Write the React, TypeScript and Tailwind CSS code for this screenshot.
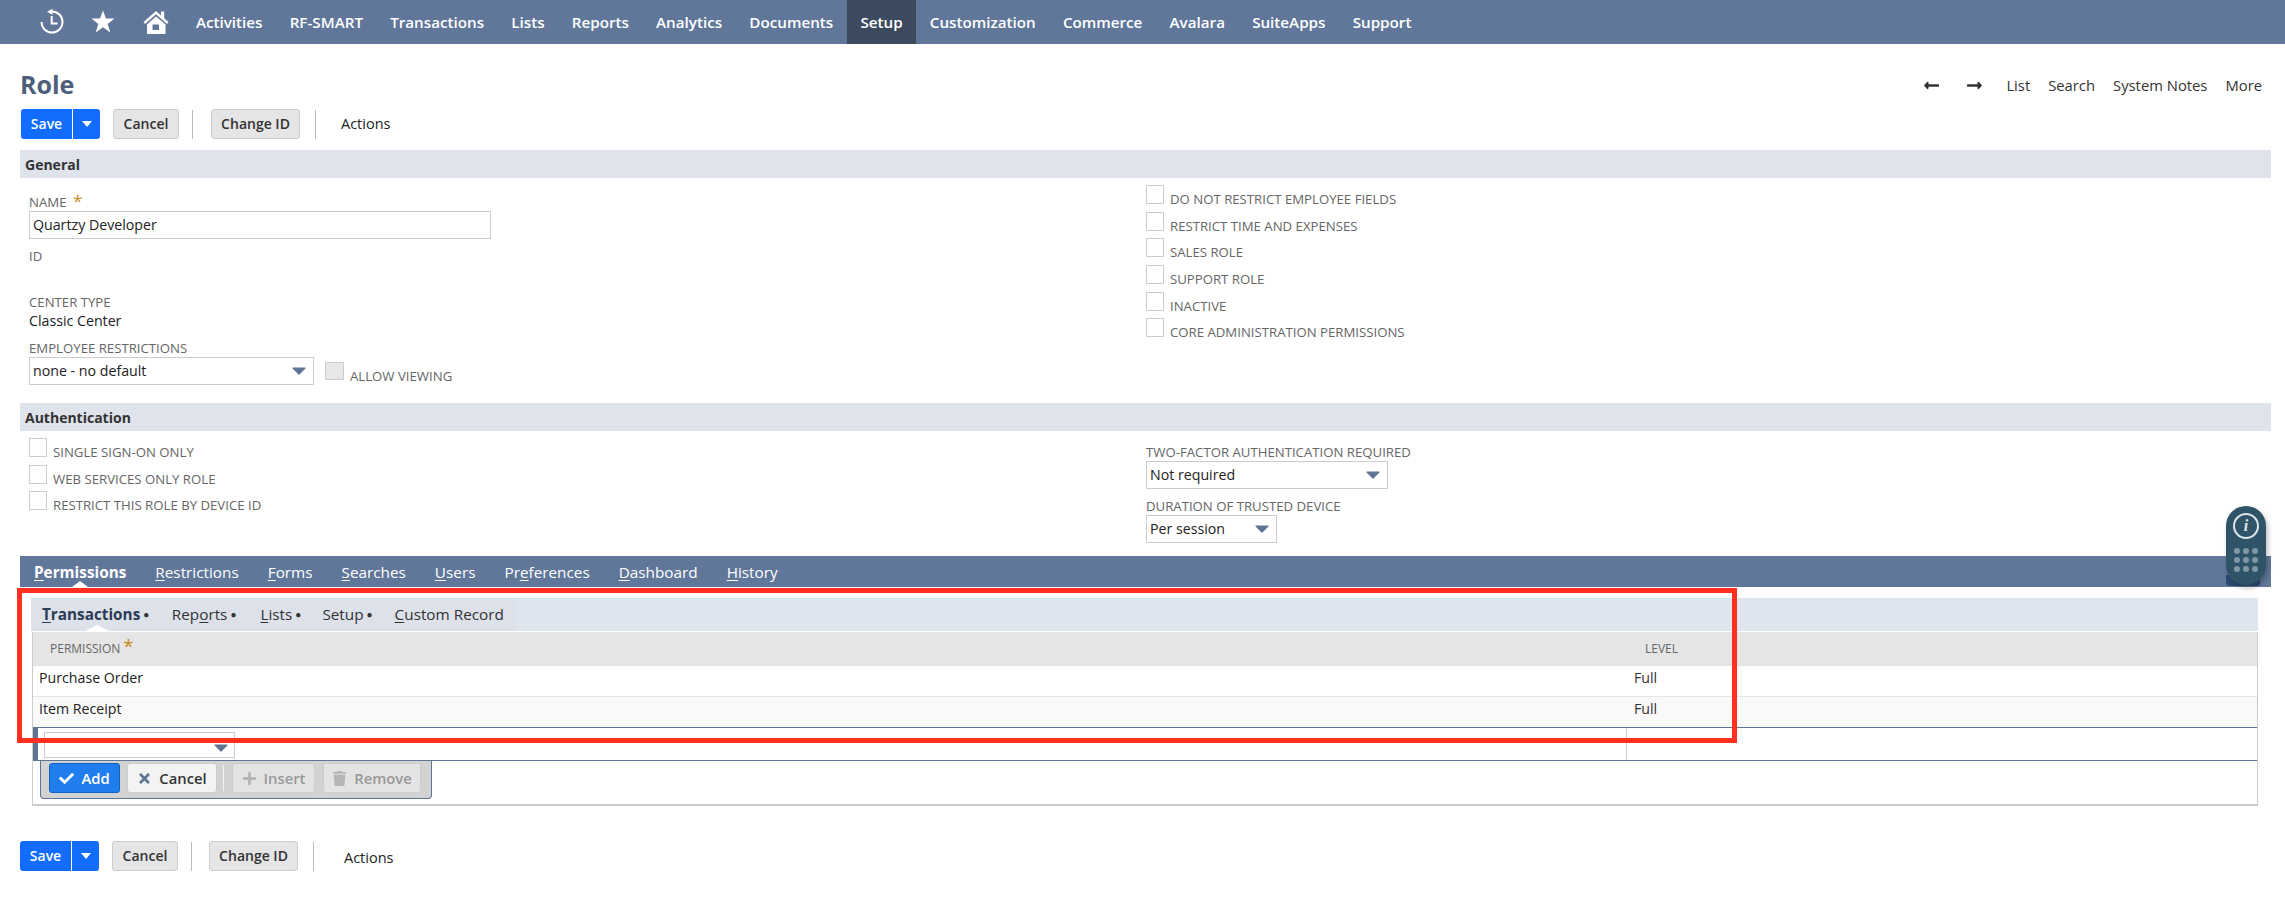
import { FaCheck, FaLongArrowAltLeft, FaLongArrowAltRight, FaPlus, FaTimes, FaTrash } from "react-icons/fa";

const navItems = ["Activities", "RF-SMART", "Transactions", "Lists", "Reports", "Analytics", "Documents", "Setup", "Customization", "Commerce", "Avalara", "SuiteApps", "Support"];

const recordTabs = [
	["", "P", "ermissions"],
	["", "R", "estrictions"],
	["", "F", "orms"],
	["", "S", "earches"],
	["", "U", "sers"],
	["Pr", "e", "ferences"],
	["", "D", "ashboard"],
	["", "H", "istory"],
];

function Caret({ className = "" }: { className?: string }) {
	return (
		<svg viewBox="0 0 14 8" className={`w-[14px] h-[8px] ${className}`}>
			<path d="M1 0.5h12a.6.6 0 0 1 .45 1L7.5 7.5a.7.7 0 0 1-1 0L.55 1.5A.6.6 0 0 1 1 .5z" fill="#5f7595" />
		</svg>
	);
}

function Select({ value, className }: { value: string; className: string }) {
	return (
		<div className={`flex items-center justify-between border border-[#ccc] pl-[3px] pr-[7px] text-[14.2px] text-[#222] ${className}`}>
			<span className="pb-px">{value}</span>
			<Caret />
		</div>
	);
}

function CheckRow({ label }: { label: string }) {
	return (
		<div className="flex h-[26.7px] items-start">
			<div className="w-[18px] h-[19px] border border-[#ccc] bg-white" />
			<span className="ml-[6px] mt-[5px] h-[18px] leading-[18px] text-[13.2px] text-[#666]">{label}</span>
		</div>
	);
}

function Label({ children, className = "" }: { children: React.ReactNode; className?: string }) {
	return <div className={`h-[18px] leading-[18px] text-[13.2px] text-[#666] ${className}`}>{children}</div>;
}

function SectionHeader({ title }: { title: string }) {
	return <div className="h-[28px] bg-[#dfe3eb] pl-[5px] text-[14px] leading-[29px] font-bold text-[#333]">{title}</div>;
}

function Toolbar({ bottom }: { bottom?: boolean }) {
	const button = "h-[30px] rounded-[3px] border border-[#ccc] bg-[#e5e5e5] text-center text-[14px] leading-[28px] font-semibold text-[#333]";
	const sep = "h-[29px] w-px bg-[#bbb]";
	return (
		<div className={`flex h-[30px] items-center ${bottom ? "" : "ml-px"}`}>
			<div className="flex h-[30px] w-[79px] rounded-[3px] bg-[#126dff] text-white">
				<div className="w-[52px] border-r border-white text-center text-[14px] leading-[30px] font-semibold">Save</div>
				<div className="flex flex-1 items-center justify-center">
					<svg viewBox="0 0 10 6" className="w-[10px] h-[6px]">
						<path d="M0 0h10L5 6z" fill="#fff" />
					</svg>
				</div>
			</div>
			<div className={`${button} ml-[13px] w-[66px]`}>Cancel</div>
			<div className={`${sep} ml-[13px]`} />
			<div className={`${button} w-[89px] ${bottom ? "ml-[17px]" : "ml-[18px]"}`}>Change ID</div>
			<div className={`${sep} ml-[15px]`} />
			<div className={`text-[14.5px] font-medium text-[#222] ${bottom ? "ml-[30px] mt-[4px]" : "ml-[25px]"}`}>Actions</div>
		</div>
	);
}

export default function App() {
	return (
		<div className="relative h-[912px] w-[2285px] overflow-hidden bg-white font-['Open_Sans',sans-serif]">
			<nav className="flex h-[44px] items-center bg-[#61779a] text-[15.2px] font-semibold text-white">
				<div className="flex w-[182.3px] items-center pl-[40px]">
					<svg viewBox="0 0 24 24" className="w-[24px] h-[24px] overflow-visible" fill="none" stroke="#fff" strokeWidth="2">
						<path d="M12 1.5A10.5 10.5 0 1 1 1.5 12" />
						<path d="M12.5 -1.2v6L7 1.8z" fill="#fff" stroke="none" />
						<path d="M11.7 6v7.5h6" />
					</svg>
					<svg viewBox="0 0 24 24" className="ml-[27px] w-[24px] h-[24px]" fill="#fff">
						<path d="M12 0.5l3 8h8.5l-6.8 5.4 2.6 8.6L12 17.3l-7.3 5.2 2.6-8.6L.5 8.5H9z" />
					</svg>
					<svg viewBox="0 0 26 24" className="ml-[28px] w-[26px] h-[24px]" fill="#fff">
						<path d="M.5 12 13 1l5 4.4V1.5h3.2v6.7L25.5 12l-1.6 1.9L13 4.2 2.1 13.9z" />
						<path fillRule="evenodd" d="M4 14.5 13 6.5l9.5 8V24H4zM9.5 14.5V20h6.5v-5.5z" />
					</svg>
				</div>
				{navItems.map((item) => (
					<div key={item} className={`flex h-full items-center px-[13.6px] ${item === "Setup" ? "bg-[#3c4a5f]" : ""}`}>
						{item}
					</div>
				))}
			</nav>

			<main className="pl-[20px] pr-[14px]">
				<div className="flex h-[65px] items-center justify-between">
					<h1 className="pt-[16px] text-[25px] font-bold text-[#4d5f79]">Role</h1>
					<div className="flex items-center pt-[17px] pr-[9px] text-[14.8px] font-medium text-[#333]">
						<FaLongArrowAltLeft className="text-[17px]" />
						<FaLongArrowAltRight className="ml-[26px] text-[17px]" />
						<span className="ml-[23px]">List</span>
						<span className="ml-[18px]">Search</span>
						<span className="ml-[18px]">System Notes</span>
						<span className="ml-[18px]">More</span>
					</div>
				</div>

				<Toolbar />

				<div className="mt-[11px]">
					<SectionHeader title="General" />
					<div className="flex h-[225px] pl-[9px]">
						<div className="w-[1117px] pt-[14px]">
							<Label>
								NAME <span className="ml-[3px] text-[17px] text-[#c98a1e]">*</span>
							</Label>
							<div className="mt-px h-[28px] w-[462px] border border-[#ccc] pl-[3px] text-[14.2px] leading-[26px] text-[#222]">Quartzy Developer</div>
							<Label className="mt-[8px]">ID</Label>
							<Label className="mt-[28px]">CENTER TYPE</Label>
							<div className="mt-px h-[18px] text-[14.2px] leading-[18px] text-[#222]">Classic Center</div>
							<Label className="mt-[9px]">EMPLOYEE RESTRICTIONS</Label>
							<div className="flex">
								<Select value="none - no default" className="h-[28px] w-[285px]" />
								<div className="ml-[11px] mt-[5px] h-[18px] w-[19px] border border-[#ccc] bg-[#e8e8e8]" />
								<span className="ml-[6px] mt-[10px] text-[13.2px] leading-[18px] text-[#666]">ALLOW VIEWING</span>
							</div>
						</div>
						<div className="pt-[7px]">
							{["DO NOT RESTRICT EMPLOYEE FIELDS", "RESTRICT TIME AND EXPENSES", "SALES ROLE", "SUPPORT ROLE", "INACTIVE", "CORE ADMINISTRATION PERMISSIONS"].map((label) => (
								<CheckRow key={label} label={label} />
							))}
						</div>
					</div>
				</div>

				<SectionHeader title="Authentication" />
				<div className="flex h-[125px] pl-[9px]">
					<div className="w-[1117px] pt-[7px]">
						{["SINGLE SIGN-ON ONLY", "WEB SERVICES ONLY ROLE", "RESTRICT THIS ROLE BY DEVICE ID"].map((label) => (
							<CheckRow key={label} label={label} />
						))}
					</div>
					<div className="pt-[12px]">
						<Label>TWO-FACTOR AUTHENTICATION REQUIRED</Label>
						<Select value="Not required" className="h-[28px] w-[242px]" />
						<Label className="mt-[8px]">DURATION OF TRUSTED DEVICE</Label>
						<Select value="Per session" className="h-[28px] w-[131px]" />
					</div>
				</div>

				<div className="relative flex h-[31px] items-center gap-[29px] bg-[#61779a] pl-[14px] pt-[2px] text-[15.3px] text-white">
					{recordTabs.map(([pre, key, post], i) => (
						<span key={key} className={i === 0 ? "font-bold" : ""}>
							{pre}
							<u className="underline-offset-2">{key}</u>
							{post}
						</span>
					))}
					<div className="absolute bottom-0 left-[52px] h-0 w-0 border-x-[8px] border-b-[6px] border-x-transparent border-b-white" />
				</div>

				<div className="ml-[11px] mr-[13px] mt-[11px]">
					<div className="h-[33px] bg-[#dfe5ef]">
						<div className="relative flex h-full w-[486px] items-center bg-[#dde1ea] pl-[11px] text-[15.3px] text-[#333]">
							<span className="font-bold text-[#2b3c55]">
								<u className="underline-offset-2">T</u>ransactions
							</span>
							<span className="ml-[3px] text-[10px]">●</span>
							<span className="ml-[22.5px]">
								Rep<u className="underline-offset-2">o</u>rts
							</span>
							<span className="ml-[3px] text-[10px]">●</span>
							<span className="ml-[24px]">
								<u className="underline-offset-2">L</u>ists
							</span>
							<span className="ml-[3px] text-[10px]">●</span>
							<span className="ml-[21px]">Setup</span>
							<span className="ml-[3px] text-[10px]">●</span>
							<span className="ml-[22px]">
								<u className="underline-offset-2">C</u>ustom Record
							</span>
							<div className="absolute bottom-0 left-[54px] h-0 w-0 border-x-[12px] border-b-[6px] border-x-transparent border-b-white" />
						</div>
					</div>

					<div className="ml-px h-[174px] border-x border-b-2 border-[#ccc]">
						<div className="mt-px flex h-[34px] items-center bg-[#e5e5e5] text-[12px] text-[#666]">
							<div className="w-[1594px] pl-[17px]">
								PERMISSION<span className="ml-[3px] text-[19px] leading-[12px] text-[#c98a1e]">*</span>
							</div>
							<div className="pl-[18px]">LEVEL</div>
						</div>
						<div className="flex h-[31px] items-center border-b border-[#e5e5e5] bg-white pb-[6px] text-[14.2px] text-[#222]">
							<div className="w-[1601px] pl-[6px]">Purchase Order</div>
							<div className="text-[#333]">Full</div>
						</div>
						<div className="flex h-[30px] items-center bg-[#f9f9f9] pb-[6px] text-[14.2px] text-[#222]">
							<div className="w-[1601px] pl-[6px]">Item Receipt</div>
							<div className="text-[#333]">Full</div>
						</div>
						<div className="flex h-[34px] border-y border-[#5f7595] border-l-[5px]">
							<div className="w-[1589px] border-r border-[#ccc] pl-[6px] pt-[4px]">
								<div className="relative h-[26px] w-[191px] border border-[#ccc]">
									<Caret className="absolute right-[6px] top-[11px]" />
								</div>
							</div>
						</div>
						<div className="ml-[7px] flex h-[38px] w-[392px] items-center rounded-b-[4px] border-x border-b border-[#5f7595] bg-[#d2d2d2] pb-[3px] pl-[8px] text-[14.8px] font-semibold">
							<div className="flex h-[30px] w-[71px] items-center justify-center gap-[7px] rounded-[3px] border border-[#1262c4] bg-[#1f7ded] text-white">
								<FaCheck className="text-[15px]" />
								Add
							</div>
							<div className="ml-[7px] flex h-[30px] w-[90px] items-center justify-center gap-[7px] rounded-[3px] border border-[#ccc] bg-[#f3f3f3] text-[#333]">
								<FaTimes className="text-[15px] text-[#5f7595]" />
								Cancel
							</div>
							<div className="ml-[6px] h-[26px] w-px bg-[#f3f3f3]" />
							<div className="ml-[8px] flex h-[30px] w-[83px] items-center justify-center gap-[7px] rounded-[3px] border border-[#ccc] bg-[#e3e3e3] text-[#999]">
								<FaPlus className="text-[15px] text-[#b5b5b5]" />
								Insert
							</div>
							<div className="ml-[8px] flex h-[30px] w-[98px] items-center justify-center gap-[7px] rounded-[3px] border border-[#ccc] bg-[#e3e3e3] text-[#999]">
								<FaTrash className="text-[15px] text-[#b5b5b5]" />
								Remove
							</div>
						</div>
					</div>
				</div>

				<div className="mt-[35px]">
					<Toolbar bottom />
				</div>
			</main>

			{/* annotation drawn over the sublist */}
			<div className="pointer-events-none absolute left-[17px] top-[588px] h-[155px] w-[1720px] border-[5px] border-[#ff3020]" />

			{/* floating help widget */}
			<div className="absolute left-[2226px] top-[575px] h-[11px] w-[34px] rounded-b-[3px] bg-[#2d4a72]" />
			<div className="absolute left-[2226px] top-[506px] flex h-[79px] w-[40px] flex-col items-center rounded-[20px] bg-[#2f5468] shadow-[2px_3px_5px_rgba(0,0,0,0.25)]">
				<div className="mt-[7px] flex h-[26px] w-[26px] items-center justify-center rounded-full border-2 border-[#dfe6ea] font-['Liberation_Serif',serif] text-[16px] font-bold italic leading-none text-[#dfe6ea]">i</div>
				<div className="mt-[9px] grid grid-cols-3 gap-[3px]">
					{[1, 2, 3, 4, 5, 6, 7, 8, 9].map((n) => (
						<div key={n} className="h-[6px] w-[6px] rounded-full bg-[#7f98a3]" />
					))}
				</div>
			</div>
		</div>
	);
}
